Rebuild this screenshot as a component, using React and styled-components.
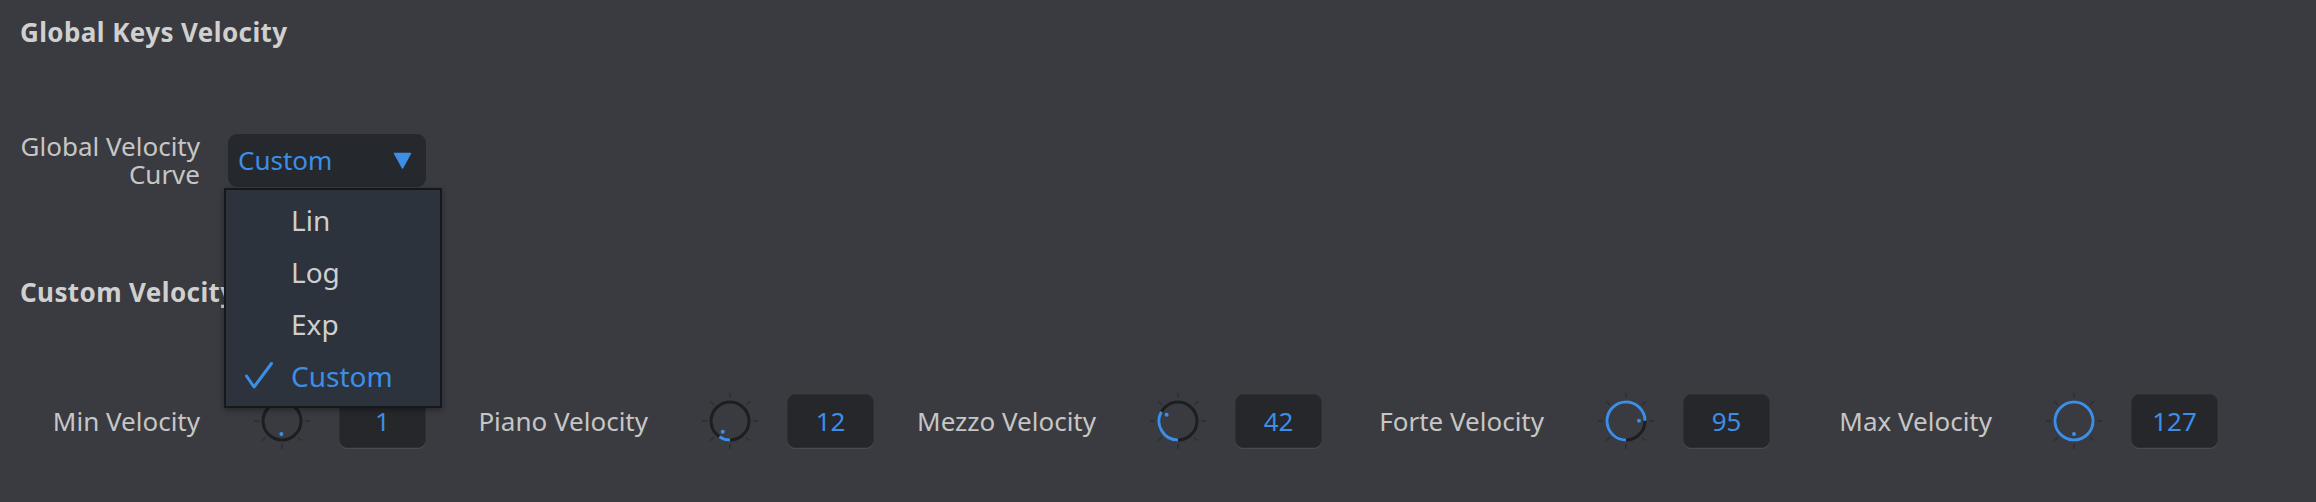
import React from 'react';
import styled, { createGlobalStyle } from 'styled-components';

const GlobalStyle = createGlobalStyle`
body {
  margin: 0;
  background: #3a3b40;
  font-family: "Noto Sans", "DejaVu Sans", sans-serif;
}
`

const Page = styled.main`
min-height: 502px;
padding: 16px 20px 0;
box-sizing: border-box;
background: #3a3b40;
color: #c8c8c8;
`

const SectionTitle = styled.h2`
margin: ${p => p.$top || 0}px 0 0;
font-size: 26px;
line-height: 32px;
font-weight: 700;
letter-spacing: 0.4px;
color: #d0d0d0;
`

const CurveRow = styled.div`
display: flex;
align-items: center;
gap: 28px;
margin-top: 84px;
`

const FieldLabel = styled.div`
width: 180px;
text-align: right;
font-size: 26px;
color: #c6c6c6;
`

const LabelLine = styled.div`
height: 28px;
line-height: 28px;
`

const SelectWrap = styled.div`
position: relative;
`

const SelectButton = styled.div`
width: 198px;
height: 53px;
box-sizing: border-box;
padding: 0 14px 0 10px;
display: flex;
align-items: center;
justify-content: space-between;
background: #25282d;
border-radius: 9px;
color: #3d8ee6;
font-size: 26px;
`

const Menu = styled.ul`
position: absolute;
top: 54px;
left: -4px;
width: 218px;
box-sizing: border-box;
margin: 0;
padding: 4px 0;
list-style: none;
background: #2c333c;
border: 2px solid #16181b;
box-shadow: 0 2px 6px rgba(0, 0, 0, 0.35);
z-index: 2;
`

const MenuItem = styled.li`
display: flex;
align-items: center;
height: 52px;
padding-left: 19px;
font-size: 28px;
color: ${p => (p.$active ? '#3d8ee6' : '#cfcfcf')};
`

const CheckSlot = styled.span`
width: 46px;
display: flex;
align-items: center;
`

const KnobGrid = styled.div`
display: grid;
grid-template-columns: repeat(5, 448px);
margin-top: 86px;
`

const KnobGroup = styled.div`
display: flex;
align-items: center;
height: 54px;
`

const KnobLabel = styled.div`
width: 180px;
flex: 0 0 180px;
text-align: right;
white-space: nowrap;
font-size: 26px;
color: #c6c6c6;
`

const KnobSvg = styled.svg`
width: 60px;
height: 60px;
margin: 0 27px 0 52px;
flex: 0 0 60px;
`

const ValueBox = styled.div`
width: 87px;
height: 54px;
box-sizing: border-box;
display: flex;
align-items: center;
justify-content: center;
background: #25272b;
border: 1px solid #2d2f33;
border-radius: 8px;
box-shadow: 0 1px 0 #4a4b50;
color: #3d8ee6;
font-size: 26px;
`

const BLUE = '#3d8ee6';

function Knob({ value }) {
  const r = 19;
  const frac = value / 127;
  const ang = frac * 2 * Math.PI;
  const ex = -Math.sin(ang) * r;
  const ey = Math.cos(ang) * r;
  const large = frac > 0.5 ? 1 : 0;
  const ticks = [0, 1, 2, 3, 4, 5, 6, 7].map(k => {
    const a = (k * Math.PI) / 4;
    return (
      <line
        key={k}
        x1={Math.sin(a) * 23}
        y1={-Math.cos(a) * 23}
        x2={Math.sin(a) * 28}
        y2={-Math.cos(a) * 28}
        stroke="#2c2d31"
        strokeWidth="1.5"
      />
    );
  });
  return (
    <KnobSvg viewBox="-30 -30 60 60">
      {ticks}
      <circle r={r} fill="none" stroke="#1c1e21" strokeWidth="3" />
      {frac >= 1 ? (
        <circle r={r} fill="none" stroke={BLUE} strokeWidth="3" />
      ) : frac > 0.02 ? (
        <path
          d={`M 0 ${r} A ${r} ${r} 0 ${large} 1 ${ex.toFixed(2)} ${ey.toFixed(2)}`}
          fill="none"
          stroke={BLUE}
          strokeWidth="3"
        />
      ) : null}
      <circle cx={-Math.sin(ang) * 13} cy={Math.cos(ang) * 13} r="2" fill={BLUE} />
    </KnobSvg>
  );
}

const knobs = [
  { label: 'Min Velocity', value: 1 },
  { label: 'Piano Velocity', value: 12 },
  { label: 'Mezzo Velocity', value: 42 },
  { label: 'Forte Velocity', value: 95 },
  { label: 'Max Velocity', value: 127 },
];

const options = ['Lin', 'Log', 'Exp', 'Custom'];

export default function App() {
  const selected = 'Custom';
  return (
    <Page>
      <GlobalStyle />
      <SectionTitle>Global Keys Velocity</SectionTitle>
      <CurveRow>
        <FieldLabel>
          <LabelLine>Global Velocity</LabelLine>
          <LabelLine>Curve</LabelLine>
        </FieldLabel>
        <SelectWrap>
          <SelectButton>
            <span>{selected}</span>
            <svg width="19" height="17" viewBox="0 0 19 17">
              <path d="M1.5 1.5 H17.5 L9.5 16 Z" fill={BLUE} stroke={BLUE} strokeWidth="1.5" strokeLinejoin="round" />
            </svg>
          </SelectButton>
          <Menu>
            {options.map(o => (
              <MenuItem key={o} $active={o === selected}>
                <CheckSlot>
                  {o === selected && (
                    <svg width="28" height="27" viewBox="0 0 28 27">
                      <path d="M1.5 14 L9 25 L26.5 1.5" fill="none" stroke={BLUE} strokeWidth="3" strokeLinecap="round" strokeLinejoin="round" />
                    </svg>
                  )}
                </CheckSlot>
                {o}
              </MenuItem>
            ))}
          </Menu>
        </SelectWrap>
      </CurveRow>
      <SectionTitle $top={88}>Custom Velocity</SectionTitle>
      <KnobGrid>
        {knobs.map(k => (
          <KnobGroup key={k.label}>
            <KnobLabel>{k.label}</KnobLabel>
            <Knob value={k.value} />
            <ValueBox>{k.value}</ValueBox>
          </KnobGroup>
        ))}
      </KnobGrid>
    </Page>
  );
}
